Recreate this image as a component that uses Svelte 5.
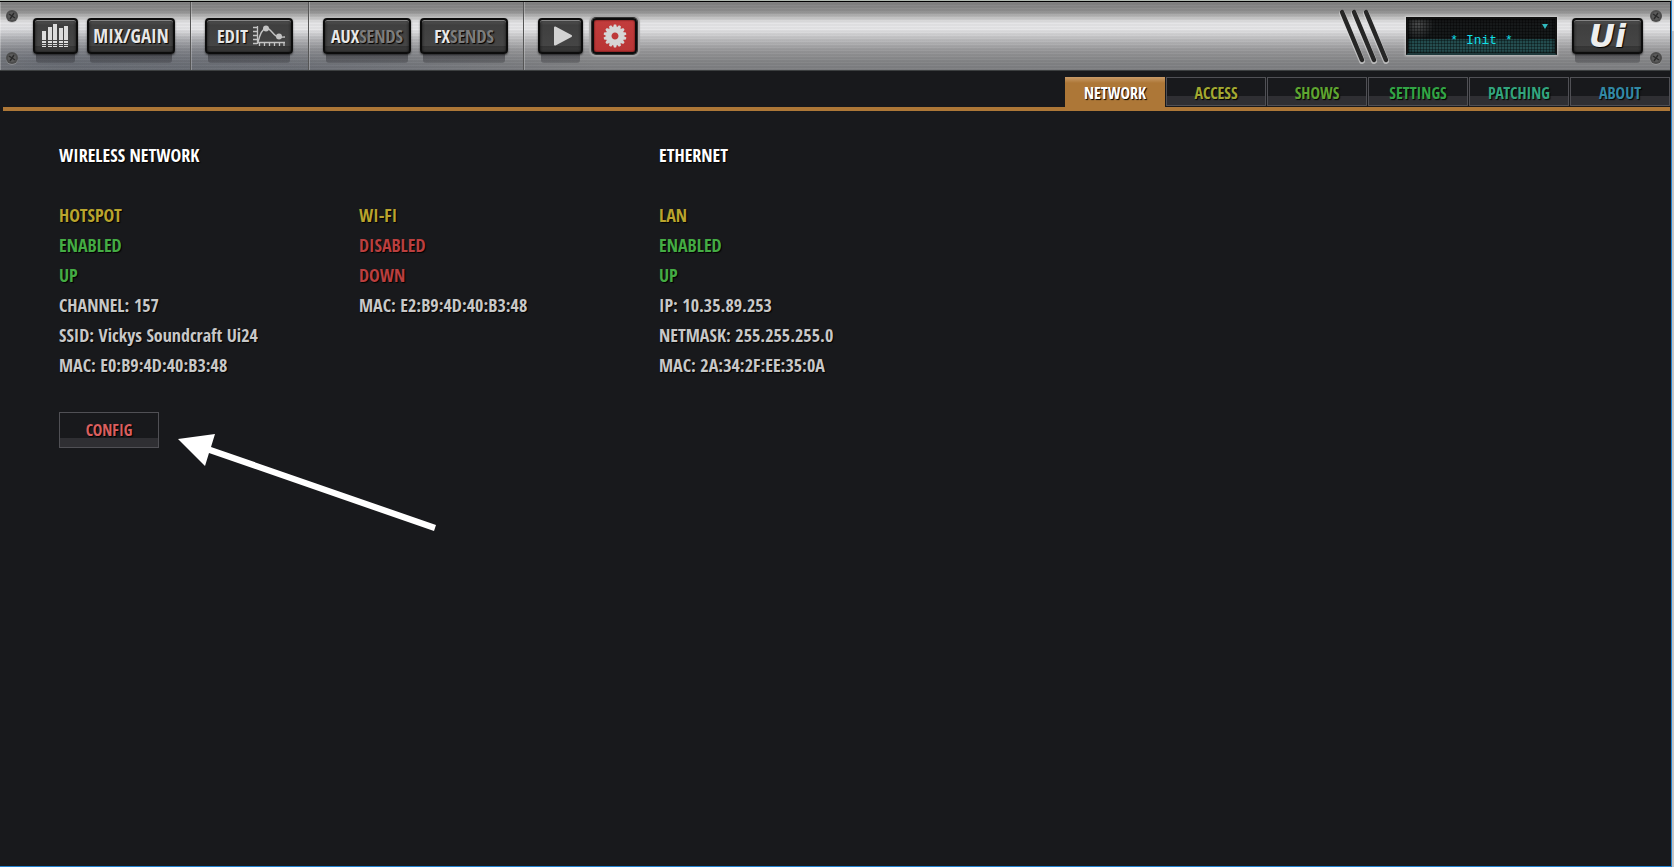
<script>
  const tabs = [
    { id: 'network', label: 'NETWORK' },
    { id: 'access', label: 'ACCESS' },
    { id: 'shows', label: 'SHOWS' },
    { id: 'settings', label: 'SETTINGS' },
    { id: 'patching', label: 'PATCHING' },
    { id: 'about', label: 'ABOUT' }
  ];

  let active = $state('network');

  const sections = [
    {
      title: 'WIRELESS NETWORK',
      config: true,
      adapters: [
        {
          name: 'HOTSPOT',
          up: true,
          info: ['CHANNEL: 157', 'SSID: Vickys Soundcraft Ui24', 'MAC: E0:B9:4D:40:B3:48']
        },
        { name: 'WI-FI', up: false, info: ['MAC: E2:B9:4D:40:B3:48'] }
      ]
    },
    {
      title: 'ETHERNET',
      config: false,
      adapters: [
        {
          name: 'LAN',
          up: true,
          info: ['IP: 10.35.89.253', 'NETMASK: 255.255.255.0', 'MAC: 2A:34:2F:EE:35:0A']
        }
      ]
    }
  ];

  // meter icon: x, top of each bar
  const bars = [[0, 7], [6, 3], [11, 0], [17, 4], [22, 2]];
  const teeth = Array.from({ length: 14 }, (_, i) => (i * 360) / 14);
</script>

{#snippet screws()}
  <svg class="screws" viewBox="0 0 14 68" aria-hidden="true">
    {#each [14, 56] as y}
      <circle cx="7" cy={y + 1} r="6" fill="#aaa" opacity="0.5" />
      <circle cx="7" cy={y} r="6" fill="#4c4c4c" />
      <circle cx="7" cy={y} r="4" fill="#5b5b5b" />
      <path d="M4 {y - 2}l6 4M9 {y - 3}l-4 6" stroke="#2b2b2b" stroke-width="1.4" />
    {/each}
  </svg>
{/snippet}

<div class="window">
  <div class="app">
    <header class="bar">
      <div class="screw-left">{@render screws()}</div>

      <div class="group first">
        <button class="key small" aria-label="Meters">
          <svg width="27" height="24" viewBox="0 0 27 24" fill="#dcdcdc" aria-hidden="true">
            {#each bars as [x, top]}
              <rect {x} y={top} width="4" height={16 - top} />
              <rect {x} y="17" width="4" height="2" />
              <rect {x} y="20" width="4" height="1" />
              <rect {x} y="22" width="4" height="1" />
            {/each}
          </svg>
        </button>
        <button class="key wide mix">MIX/GAIN</button>
      </div>

      <div class="group">
        <button class="key wide edit">
          EDIT
          <svg width="32" height="22" viewBox="0 0 32 22" fill="none" stroke="#c4c4c4" aria-hidden="true">
            <path d="M4.5 1v18M0 2.5h4M0 6.5h4M0 10.5h4M0 14.5h4M0 18.5h4" stroke-width="1.3" />
            <path d="M5 17.5h27M6.5 18v3M11.5 18v3M16.5 18v3M21.5 18v3M26.5 18v3M31 18v3" stroke-width="1.3" />
            <path d="M5 17C7 9 9 4 13 3c4 0 6 5 10 8 3 2 5 1 9 1" stroke-width="1.4" />
            <circle cx="13" cy="3.5" r="3" fill="#c4c4c4" stroke="none" />
            <circle cx="26" cy="11.5" r="3" fill="#c4c4c4" stroke="none" />
          </svg>
        </button>
      </div>

      <div class="group">
        <button class="key wide">AUX<span>SENDS</span></button>
        <button class="key wide">FX<span>SENDS</span></button>
      </div>

      <div class="group">
        <button class="key small" aria-label="Player">
          <svg class="play" width="20" height="20" viewBox="0 0 20 20" aria-hidden="true">
            <path d="M2 1.5L18 10L2 18.5Z" fill="#d2d2d2" stroke="#d2d2d2" stroke-width="2" stroke-linejoin="round" />
          </svg>
        </button>
        <button class="key small lit" aria-label="Setup">
          <svg width="24" height="24" viewBox="-12 -12 24 24" aria-hidden="true">
            {#each teeth as angle}
              <path d="M-2.2 -8L-1.1 -11.4H1.1L2.2 -8Z" fill="#d6d6d6" transform="rotate({angle})" />
            {/each}
            <circle r="6.2" fill="none" stroke="#d6d6d6" stroke-width="5.4" />
          </svg>
        </button>
      </div>

      <svg class="vents" width="51" height="56" viewBox="0 0 51 56" stroke-linecap="round" aria-hidden="true">
        {#each [0, 12, 24] as x}
          <path d="M{x + 3} 5L{x + 23} 53" stroke="#ddd" stroke-opacity="0.6" stroke-width="6" />
          <path d="M{x + 3} 4L{x + 23} 52" stroke="#262626" stroke-width="4.5" />
        {/each}
      </svg>

      <button class="lcd" aria-haspopup="true">* Init *</button>
      <button class="key logo">Ui</button>
      {@render screws()}
    </header>

    <nav class="tabs">
      {#each tabs as tab}
        <button
          class="tab {tab.id}"
          class:active={active === tab.id}
          onclick={() => (active = tab.id)}>{tab.label}</button>
      {/each}
    </nav>

    <main>
      {#each sections as section}
        <section>
          <h2>{section.title}</h2>
          <div class="adapters">
            {#each section.adapters as adapter}
              <ul class:up={adapter.up}>
                <li class="name">{adapter.name}</li>
                <li class="status">{adapter.up ? 'ENABLED' : 'DISABLED'}</li>
                <li class="status">{adapter.up ? 'UP' : 'DOWN'}</li>
                {#each adapter.info as line}
                  <li>{line}</li>
                {/each}
              </ul>
            {/each}
          </div>
          {#if section.config}
            <div class="config">
              <button class="tab">CONFIG</button>
              <svg class="arrow" width="260" height="100" viewBox="0 0 260 100" aria-hidden="true">
                <path d="M0 5L37 0L33 13L258 91L256 97L31 19L27 32Z" fill="#fff" />
              </svg>
            </div>
          {/if}
        </section>
      {/each}
    </main>
  </div>
</div>

<style>
  :global(body) {
    background: #18191c;
  }

  .window {
    box-sizing: border-box;
    min-height: 100vh;
    padding-right: 2px;
    background: linear-gradient(#e4e4e4 31px, #c4c4c4 31px);
    display: flex;
    font-family: 'Open Sans Condensed', 'Open Sans', sans-serif;
    font-weight: 700;
  }

  .app {
    flex: 1;
    min-width: 0;
    background: #18191c;
    border-top: 1px solid #b2bab2;
    border-right: 1px solid #2583d0;
    border-bottom: 1px solid #2583d0;
  }

  button {
    box-sizing: border-box;
    margin: 0;
    padding: 0;
    font: inherit;
    cursor: pointer;
  }

  /* metal top bar */
  .bar {
    position: relative;
    display: flex;
    align-items: center;
    height: 68px;
    margin-right: 1px;
    border-top: 1px solid #000;
    border-bottom: 1px solid #3c3f40;
    background:
      repeating-linear-gradient(rgba(255, 255, 255, 0.03) 0 1px, rgba(0, 0, 0, 0.03) 1px 3px),
      radial-gradient(ellipse 260px 40px at 60px 60px, rgba(50, 60, 80, 0.3), transparent),
      radial-gradient(ellipse 300px 40px at 300px 68px, rgba(50, 60, 80, 0.25), transparent),
      linear-gradient(#7f7f7f 0%, #8f8f8f 14%, #b8b8b8 21%, #e4e4e6 30%, #e6e6e8 40%, #bcbcbe 55%, #969698 72%, #838486 88%, #7d7e81 100%);
  }

  .screw-left {
    position: absolute;
    left: 5px;
    top: 0;
    display: flex;
  }

  .screws {
    flex: none;
    width: 14px;
    height: 68px;
    margin: 0 7px 0 6px;
  }

  .screw-left .screws {
    margin: 0;
  }

  .group {
    box-sizing: border-box;
    display: flex;
    align-items: center;
    gap: 9px;
    height: 100%;
    padding: 0 15px 0 14px;
    border-left: 1px solid #555;
    box-shadow: inset 1px 0 rgba(255, 255, 255, 0.25);
  }

  .group.first {
    padding-left: 33px;
    border-left: 0;
  }

  .key {
    position: relative;
    flex: none;
    display: flex;
    align-items: center;
    justify-content: center;
    height: 36px;
    border: 2px solid #0c0c0c;
    border-radius: 4px;
    background: linear-gradient(#555 0, #3f3f3f 5px, #454545 26px, #343434 26px, #3c3c3c 100%);
    box-shadow:
      inset 0 1px #858585,
      inset 0 0 3px #111,
      0 1px 2px rgba(0, 0, 0, 0.6);
    color: #e8e8e8;
    font-size: 18px;
    text-shadow: 1px 1px 1px #000;
  }

  /* reflection under the key */
  .key::after {
    content: '';
    position: absolute;
    left: 1px;
    right: 1px;
    top: 34px;
    height: 9px;
    background: linear-gradient(rgba(30, 30, 35, 0.5), rgba(40, 40, 45, 0.25));
    border-radius: 0 0 3px 3px;
  }

  .key span {
    color: #7d7d7d;
  }

  .small {
    width: 45px;
  }

  .wide {
    width: 88px;
  }

  .mix {
    font-size: 19px;
  }

  .edit {
    gap: 5px;
    padding-left: 4px;
  }

  .play {
    margin-left: 5px;
  }

  .lit {
    background: linear-gradient(#c23c3c, #b93535);
    box-shadow:
      inset 0 0 2px #300,
      0 0 0 1px #333,
      0 0 1px 3px rgba(165, 165, 165, 0.9);
  }

  .lit::after {
    display: none;
  }

  .vents {
    flex: none;
    margin-left: auto;
    margin-right: 16px;
  }

  .lcd {
    position: relative;
    flex: none;
    width: 151px;
    height: 38px;
    margin-right: 15px;
    padding-top: 8px;
    border: 2px solid #111;
    border-bottom-color: #203a3c;
    background:
      repeating-linear-gradient(90deg, rgba(0, 0, 0, 0.35) 0 1px, transparent 1px 3px),
      repeating-linear-gradient(rgba(0, 0, 0, 0.35) 0 1px, transparent 1px 3px),
      radial-gradient(circle at 10px 5px, rgba(130, 130, 130, 0.5), transparent 16px),
      linear-gradient(#181a1b 0, #141819 20px, #20484a 20px, #2a5557 100%);
    box-shadow:
      inset 0 0 4px #000,
      0 0 2px 1px rgba(225, 225, 225, 0.6);
    color: #10dfe6;
    font-family: 'Liberation Mono', monospace;
    font-size: 13px;
    font-weight: 400;
  }

  .lcd::after {
    content: '';
    position: absolute;
    right: 7px;
    top: 5px;
    border: 3px solid transparent;
    border-top: 5px solid #30b8bd;
    border-bottom: 0;
  }

  .logo {
    width: 71px;
    color: #eee;
    font-family: 'DejaVu Sans', sans-serif;
    font-size: 32px;
    font-style: italic;
    line-height: 32px;
  }

  /* tabs */
  .tabs {
    display: flex;
    justify-content: flex-end;
    gap: 1px;
    margin: 0 1px 0 3px;
    padding-top: 6px;
    border-bottom: 4px solid #ad7737;
  }

  .tab {
    width: 100px;
    height: 29px;
    margin-bottom: 1px;
    padding-top: 3px;
    border: 1px solid #505055;
    background: linear-gradient(to top, #2f2f33 9px, #18191c 9px);
    color: #d95f5f;
    font-size: 16px;
    line-height: 24px;
    text-shadow: 1px 1px 1px #000;
  }

  .tab.active {
    height: 30px;
    margin-bottom: 0;
    border: 0;
    background: linear-gradient(#c99b68, #ad7737 6px);
    color: #fff;
    line-height: 27px;
  }

  .access {
    color: #a3a932;
  }

  .shows {
    color: #5fa532;
  }

  .settings {
    color: #32a545;
  }

  .patching {
    color: #32a57e;
  }

  .about {
    color: #3289a5;
  }

  /* content */
  main {
    display: flex;
    flex-wrap: wrap;
    padding: 29px 59px;
    color: #c8c8c8;
    font-size: 18px;
    line-height: 30px;
    text-shadow: 1px 1px 1px #000;
  }

  h2 {
    margin: 0 0 30px;
    color: #fff;
    font-size: 18px;
  }

  .adapters {
    display: flex;
  }

  ul {
    width: 300px;
    margin: 0;
    padding: 0;
    list-style: none;
  }

  .name {
    color: #b9a42e;
  }

  .status {
    color: #ba3f3f;
  }

  .up .status {
    color: #44ac44;
  }

  .config {
    position: relative;
    display: flex;
    margin-top: 32px;
  }

  .config .tab {
    height: 36px;
    padding: 0;
    line-height: 34px;
  }

  /* pointer laid over the page */
  .arrow {
    position: absolute;
    left: 119px;
    top: 22px;
  }
</style>
